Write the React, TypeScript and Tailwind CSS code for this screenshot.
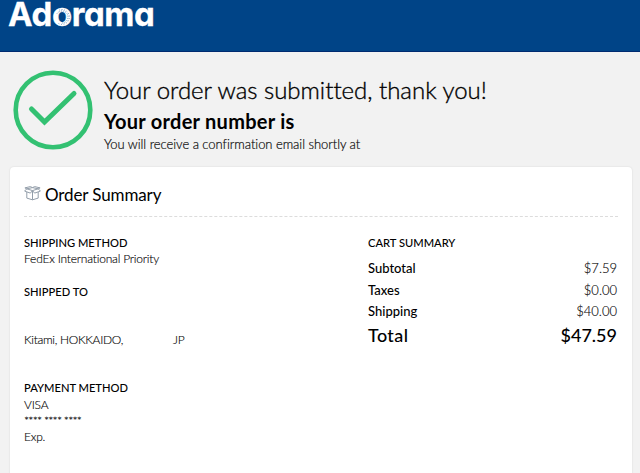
import type { ReactNode } from "react";

interface SummaryRow {
  label: string;
  amount: string;
}

const cartRows: SummaryRow[] = [
  { label: "Subtotal", amount: "$7.59" },
  { label: "Taxes", amount: "$0.00" },
  { label: "Shipping", amount: "$40.00" },
];

function Logo() {
  return (
    <div className="relative ml-[8px] w-[150px]">
      <span className="block whitespace-nowrap font-['Inter'] text-[33px] font-bold leading-[28px] tracking-[-0.4px] text-white [-webkit-text-stroke:0.3px_#fff] [font-feature-settings:'cv11']">
        Adorama
      </span>
      {/* dotted swirl on the right side of the "o" */}
      <svg className="absolute left-[44px] top-[7px] h-5 w-5" viewBox="0 0 20 20" fill="none" stroke="#004487">
        <path d="M7 3.2A7.4 7.4 0 1 1 6 16.2" strokeWidth="0.5" strokeDasharray="1 1.6" />
        <path d="M5 6.6A6 6 0 0 1 16 10 6 6 0 0 1 10 16" strokeWidth="0.6" strokeDasharray="1 1.3" />
      </svg>
    </div>
  );
}

function CheckCircle() {
  return (
    <svg className="h-20 w-20 shrink-0" viewBox="0 0 80 80" fill="none" stroke="#33c172">
      <circle cx="40" cy="40" r="37.3" strokeWidth="4.6" />
      <path d="M18.5 39 L31.5 52 L61 23.5" strokeWidth="5" strokeLinecap="round" strokeLinejoin="miter" />
    </svg>
  );
}

function BoxIcon() {
  return (
    <svg className="-mt-[3px] h-[15px] w-[17px]" viewBox="0 0 17 15" fill="none" stroke="#939eaa" strokeWidth="1" strokeLinejoin="round">
      <path d="M2.8 6v6.1l5.7 1.7 5.7-1.7V6" />
      <path d="M8.5 4.8v9" />
      <path d="M2.8 2.8 8.5 4.6 6.4 7.1.6 5.1z" />
      <path d="M14.2 2.8 8.5 4.6l2.1 2.5 5.8-2z" />
      <path d="M2.8 2.8.9 1.9 6.3.6l2.2 1 2.2-1 5.4 1.3-1.9.9-5.7-1.2z" />
    </svg>
  );
}

function SectionTitle({ children }: { children: ReactNode }) {
  return (
    <h3 className="w-fit origin-left scale-x-[0.93] text-[12px] font-medium leading-4 tracking-normal text-black [-webkit-text-stroke:0]">
      {children}
    </h3>
  );
}

export default function App() {
  return (
    <div className="h-[473px] w-[640px] overflow-hidden bg-[#f2f2f2] font-['Lato',sans-serif] text-black [font-variant-ligatures:none]">
      <header className="h-[52px] border-b border-[#002b70] bg-[#004487]">
        <Logo />
      </header>

      <section className="flex h-[115px] pl-[13px] pt-[18px]">
        <CheckCircle />
        <div className="ml-[11px] whitespace-nowrap pt-[4px]">
          <h1 className="text-[24px] font-light leading-8 tracking-[-0.02px] [-webkit-text-stroke:0.35px_#000]">
            Your order was submitted, thank you!
          </h1>
          <h2 className="text-[20px] font-bold leading-[30px] tracking-[0.28px]">Your order number is</h2>
          <p className="text-[13px] font-light leading-4 tracking-[-0.05px] [-webkit-text-stroke:0.2px_#222]">
            You will receive a confirmation email shortly at
          </p>
        </div>
      </section>

      <main className="ml-[10px] mr-[8px] h-[320px] rounded bg-white px-[14px] shadow-[0_0_2px_rgba(0,0,0,0.12)]">
        <div className="flex h-[50px] items-center gap-[5px] border-b border-dashed border-[#dcdcdc] pt-[6px]">
          <BoxIcon />
          <h2 className="-ml-px text-[17px] leading-6 tracking-[-0.12px]">Order Summary</h2>
        </div>

        <div className="flex pt-[18px]">
          <div className="w-[344px] whitespace-nowrap text-[12px] font-light leading-4 tracking-[-0.2px] text-black [-webkit-text-stroke:0.15px_#222]">
            <SectionTitle>SHIPPING METHOD</SectionTitle>
            <p>FedEx International Priority</p>
            <div className="mt-[17px]">
              <SectionTitle>SHIPPED TO</SectionTitle>
              <p className="mt-8 flex">
                <span className="w-[149px] tracking-[-0.3px]">Kitami, HOKKAIDO,</span>
                <span>JP</span>
              </p>
            </div>
            <div className="mt-8">
              <SectionTitle>PAYMENT METHOD</SectionTitle>
              <p className="mt-px">VISA</p>
              <p className="tracking-[-0.75px]">**** **** ****</p>
              <p>Exp.</p>
            </div>
          </div>

          <div className="flex-1">
            <SectionTitle>CART SUMMARY</SectionTitle>
            <dl className="mt-[7px]">
              {cartRows.map((row) => (
                <div key={row.label} className="flex h-[21.5px] items-center justify-between text-[13px]">
                  <dt className="font-medium">{row.label}</dt>
                  <dd className="-mr-px pr-[2px] font-light [-webkit-text-stroke:0.15px_#222]">{row.amount}</dd>
                </div>
              ))}
              <div className="-mt-px flex h-7 items-center justify-between text-[18px] font-medium">
                <dt className="tracking-[0.4px]">Total</dt>
                <dd className="pr-px">$47.59</dd>
              </div>
            </dl>
          </div>
        </div>
      </main>
    </div>
  );
}
